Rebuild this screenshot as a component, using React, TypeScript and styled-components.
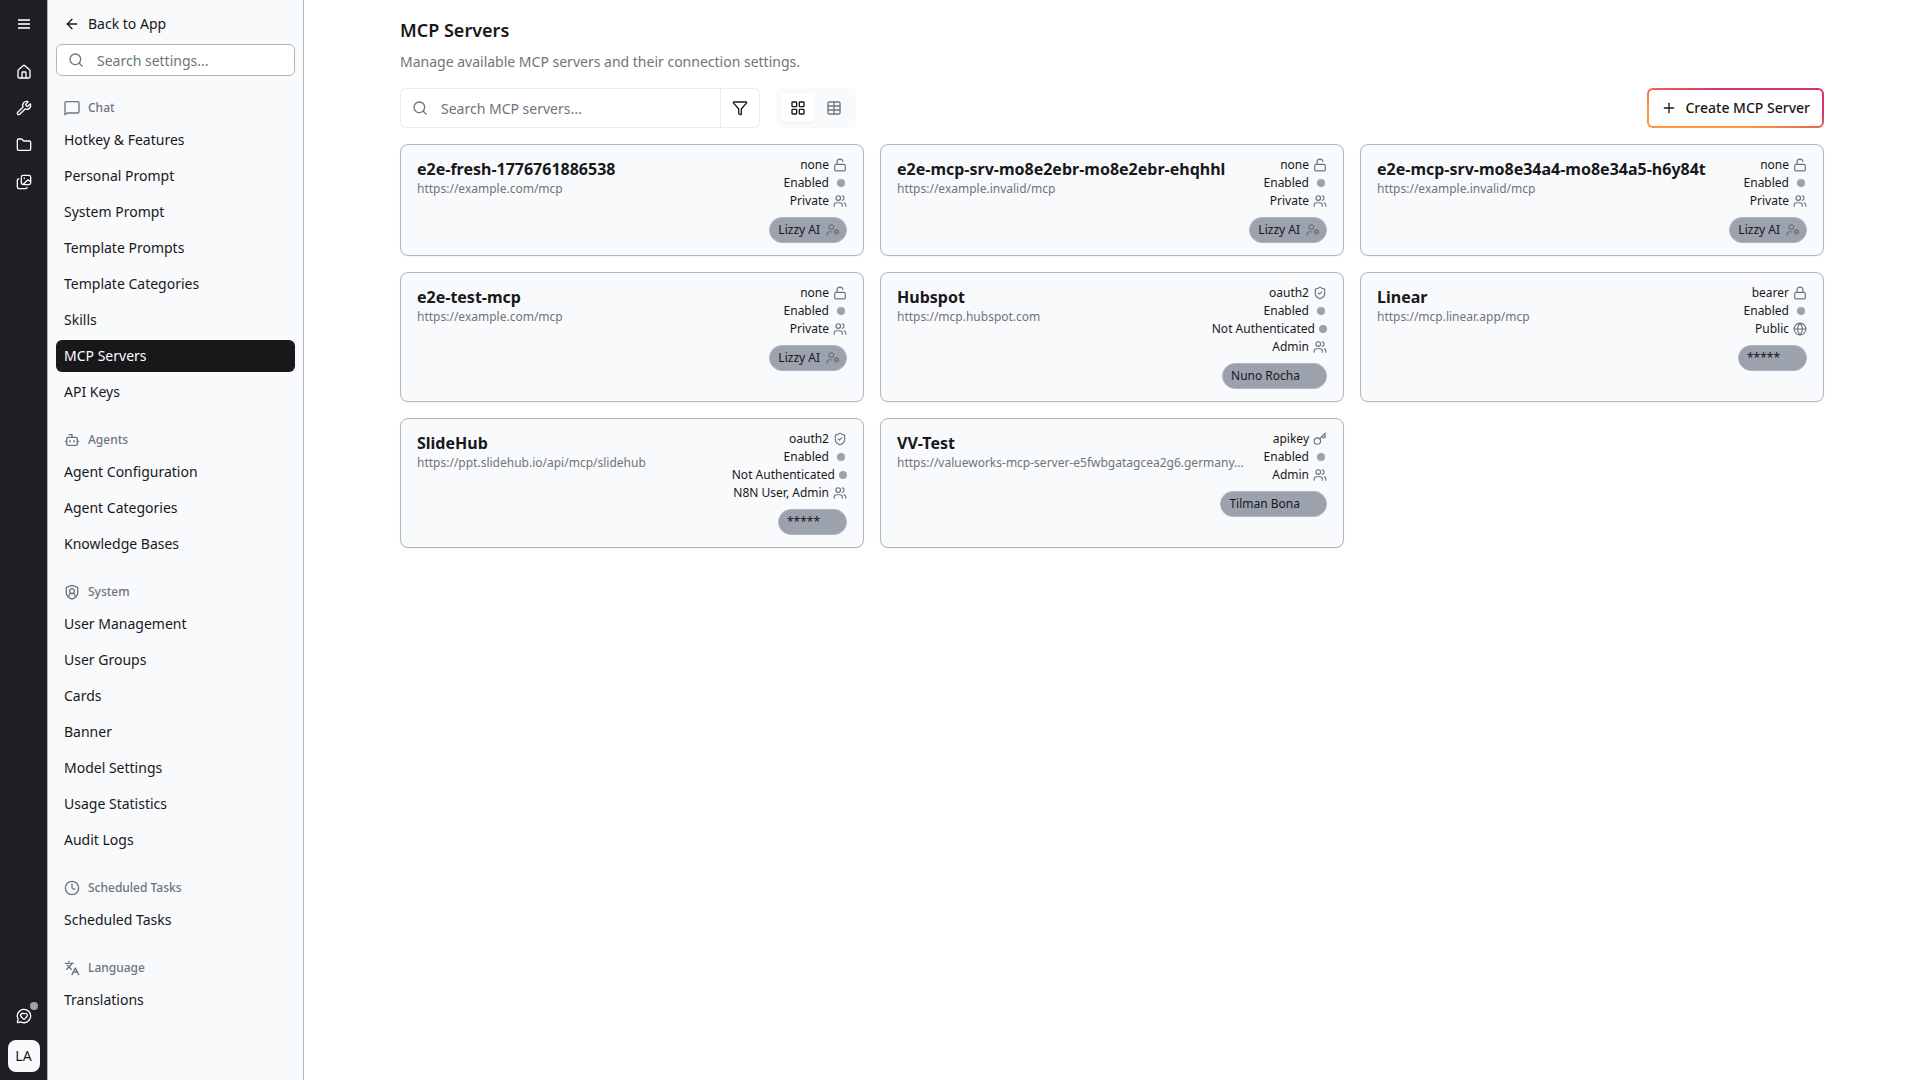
import React from "react";
import styled, { createGlobalStyle } from "styled-components";
import {
  ArrowLeft, Bot, Clock, Filter, Folder, Globe, House, Key, Languages, LayoutGrid, Lock, LockOpen,
  MessageCircleHeart, Plus, Search, ShieldCheck, Table, UserCog, Users, Wrench,
} from "lucide-react";

const c = {
  ink: "#18181b",
  rail: "#1f1e23",
  panel: "#f9fafc",
  muted: "#6c757d",
  line: "#adb5bd",
  soft: "#e9ebee",
  chip: "#9ca1ae",
};

const GlobalStyle = createGlobalStyle`
  *, *::before, *::after { box-sizing: border-box; }
  body { margin: 0; background: #fff; color: ${c.ink}; font-family: "Noto Sans", sans-serif; font-size: 14px; line-height: 20px; }
  button, input { font: inherit; color: inherit; }
  button { cursor: pointer; border: 0; padding: 0; background: none; }
  a { color: inherit; text-decoration: none; }
  h1, h2, p, ul { margin: 0; padding: 0; }
  ul { list-style: none; }
  svg { display: block; flex: none; }
`;

const Shell = styled.div`
  display: flex;
  min-height: 100vh;
`;

const Rail = styled.nav`
  display: flex;
  flex-direction: column;
  align-items: center;
  flex: none;
  width: 48px;
  padding: 12px 0 8px;
  background: ${c.rail};
  border-right: 1px solid ${c.line};
  color: #fff;
`;

const RailGroup = styled.div<{ $top: string }>`
  display: flex;
  flex-direction: column;
  align-items: center;
  gap: 12px;
  margin-top: ${(p) => p.$top};
`;

const RailButton = styled.button<{ $tall?: boolean }>`
  position: relative;
  display: grid;
  place-items: center;
  width: 32px;
  height: ${(p) => (p.$tall ? "26px" : "24px")};
`;

const Unread = styled.span`
  position: absolute;
  top: -2px;
  right: 2px;
  width: 8px;
  height: 8px;
  border-radius: 50%;
  background: ${c.chip};
`;

const Avatar = styled.button`
  width: 32px;
  height: 32px;
  border-radius: 8px;
  background: ${c.panel};
  color: ${c.ink};
`;

const Sidebar = styled.aside`
  flex: none;
  width: 256px;
  padding: 8px 8px 0;
  background: ${c.panel};
  border-right: 1px solid ${c.line};
`;

const BackLink = styled.a`
  display: flex;
  align-items: center;
  gap: 8px;
  height: 32px;
  padding: 0 8px;
`;

const Field = styled.label`
  display: flex;
  align-items: center;
  flex: 1;
  gap: 13px;
  min-width: 0;
  padding: 0 11px;
  color: ${c.muted};
`;

const TextInput = styled.input`
  flex: 1;
  min-width: 0;
  padding: 2px 0 0;
  border: 0;
  outline: 0;
  background: none;
  &::placeholder { color: ${c.muted}; opacity: 1; }
`;

const SettingsSearch = styled.div`
  display: flex;
  height: 32px;
  margin-top: 4px;
  background: #fff;
  border: 1px solid ${c.line};
  border-radius: 6px;
`;

const Section = styled.section`
  margin-top: 16px;
`;

const SectionTitle = styled.h2`
  display: flex;
  align-items: center;
  gap: 8px;
  height: 32px;
  padding: 0 8px;
  color: ${c.muted};
  font-size: 12px;
  font-weight: 500;
  line-height: 16px;
`;

const NavList = styled.ul`
  display: grid;
  gap: 4px;
`;

const NavLink = styled.a<{ $active?: boolean }>`
  display: flex;
  align-items: center;
  height: 32px;
  padding: 0 8px;
  border-radius: 6px;
  background: ${(p) => (p.$active ? c.ink : "transparent")};
  color: ${(p) => (p.$active ? "#fff" : c.ink)};
`;

const Main = styled.main`
  flex: 1;
  min-width: 0;
  padding: 16px 96px;
`;

const Heading = styled.h1`
  font-size: 18px;
  font-weight: 600;
  line-height: 28px;
`;

const Lead = styled.p`
  margin-top: 8px;
  color: ${c.muted};
`;

const Toolbar = styled.div`
  display: flex;
  gap: 16px;
  height: 40px;
  margin-top: 16px;
`;

const ServerSearch = styled.div`
  display: flex;
  width: 360px;
  border: 1px solid ${c.soft};
  border-radius: 6px;
`;

const FilterButton = styled.button`
  display: grid;
  place-items: center;
  width: 39px;
  border-left: 1px solid ${c.soft};
`;

const ViewSwitch = styled.div`
  display: flex;
  gap: 4px;
  padding: 6px;
  border-radius: 6px;
  background: ${c.panel};
`;

const ViewButton = styled.button<{ $active?: boolean }>`
  display: grid;
  place-items: center;
  width: 32px;
  border-radius: 4px;
  background: ${(p) => (p.$active ? "#fff" : "transparent")};
  box-shadow: ${(p) => (p.$active ? "0 1px 2px rgba(0, 0, 0, 0.06)" : "none")};
  color: ${(p) => (p.$active ? c.ink : c.muted)};
`;

const CreateButton = styled.button`
  display: flex;
  align-items: center;
  gap: 8px;
  margin-left: auto;
  padding: 0 12px;
  border: 2px solid transparent;
  border-radius: 6px;
  background:
    linear-gradient(#fff, #fff) padding-box,
    linear-gradient(to top right, #ff963c 30%, #d6336c 70%) border-box;
  font-weight: 500;
`;

const Grid = styled.div`
  display: grid;
  grid-template-columns: repeat(3, minmax(0, 1fr));
  gap: 16px;
  margin-top: 16px;
`;

const Card = styled.article`
  display: flex;
  flex-direction: column;
  gap: 8px;
  padding: 12px 16px;
  background: ${c.panel};
  border: 1px solid ${c.line};
  border-radius: 8px;
  box-shadow: 0 1px 2px rgba(0, 0, 0, 0.05);
`;

const CardTop = styled.div`
  display: flex;
  justify-content: space-between;
  gap: 16px;
`;

const CardText = styled.div`
  min-width: 0;
`;

const CardTitle = styled.h2`
  overflow: hidden;
  font-size: 16px;
  font-weight: 700;
  line-height: 24px;
  text-overflow: ellipsis;
  white-space: nowrap;
`;

const CardUrl = styled.p`
  color: ${c.muted};
  font-size: 12px;
  line-height: 16px;
  white-space: nowrap;
`;

const CardMeta = styled.div`
  display: flex;
  flex: none;
  flex-direction: column;
  align-items: flex-end;
  gap: 2px;
  font-size: 12px;
  line-height: 16px;
`;

const MetaRow = styled.div`
  display: flex;
  align-items: center;
  gap: 4px;
  svg { color: ${c.muted}; }
`;

const Dot = styled.span<{ $inset?: boolean }>`
  width: 8px;
  height: 8px;
  margin: ${(p) => (p.$inset ? "0 2px 0 4px" : "0")};
  border-radius: 50%;
  background: ${c.chip};
`;

const Owner = styled.div`
  display: flex;
  align-items: center;
  align-self: flex-end;
  gap: 6px;
  height: 26px;
  padding: 0 6px 0 8px;
  border: 1px solid ${c.line};
  border-radius: 13px;
  background: ${c.chip};
  font-size: 12px;
  line-height: 16px;
  svg { color: ${c.muted}; }
`;

const OwnerSlot = styled.span`
  width: 14px;
  height: 14px;
`;

const MenuIcon = () => (
  <svg width="12" height="10" viewBox="0 0 12 10" fill="#cfd3d2">
    <rect width="12" height="2" />
    <rect y="4" width="12" height="2" />
    <rect y="8" width="12" height="2" />
  </svg>
);

const ImagesIcon = () => (
  <svg width="16" height="16" viewBox="0 0 24 24" fill="none" stroke="currentColor" strokeWidth="2" strokeLinecap="round" strokeLinejoin="round">
    <rect x="8" y="2" width="14" height="14" rx="2.7" />
    <path d="M4 7.500A2 2 0 0 0 2 9.500v10a2.500 2.500 0 0 0 2.500 2.500h10a2 2 0 0 0 2-2" />
    <path d="m11 15.500 7-7 4 3" />
    <circle cx="12.500" cy="6.500" r="1.200" fill="currentColor" stroke="none" />
  </svg>
);

const ChatIcon = () => (
  <svg width="16" height="16" viewBox="0 0 24 24" fill="none" stroke="currentColor" strokeWidth="2" strokeLinejoin="round">
    <path d="M1.500 22V4.500a2 2 0 0 1 2-2h17a2 2 0 0 1 2 2v13a2 2 0 0 1-2 2H5z" />
  </svg>
);

const ShieldUserIcon = () => (
  <svg width="16" height="16" viewBox="0 0 24 24" fill="none" stroke="currentColor" strokeWidth="2" strokeLinecap="round" strokeLinejoin="round">
    <path d="M12 2 3.500 5v8c0 4.500 3.500 8 8.500 9.500 5-1.500 8.500-5 8.500-9.500V5z" />
    <circle cx="12" cy="10.500" r="3.500" />
    <path d="M7.500 18.500v-1a3 3 0 0 1 3-3h3a3 3 0 0 1 3 3v1" />
  </svg>
);

const sections = [
  { title: "Chat", icon: <ChatIcon />, items: ["Hotkey & Features", "Personal Prompt", "System Prompt", "Template Prompts", "Template Categories", "Skills", "MCP Servers", "API Keys"] },
  { title: "Agents", icon: <Bot size={16} />, items: ["Agent Configuration", "Agent Categories", "Knowledge Bases"] },
  { title: "System", icon: <ShieldUserIcon />, items: ["User Management", "User Groups", "Cards", "Banner", "Model Settings", "Usage Statistics", "Audit Logs"] },
  { title: "Scheduled Tasks", icon: <Clock size={16} />, items: ["Scheduled Tasks"] },
  { title: "Language", icon: <Languages size={16} />, items: ["Translations"] },
];

type Auth = "none" | "oauth2" | "bearer" | "apikey";
type Server = { name: string; url: string; auth: Auth; pending?: boolean; access: string; owner: string; managed?: boolean };

const servers: Server[] = [
  { name: "e2e-fresh-1776761886538", url: "https://example.com/mcp", auth: "none", access: "Private", owner: "Lizzy AI", managed: true },
  { name: "e2e-mcp-srv-mo8e2ebr-mo8e2ebr-ehqhhl", url: "https://example.invalid/mcp", auth: "none", access: "Private", owner: "Lizzy AI", managed: true },
  { name: "e2e-mcp-srv-mo8e34a4-mo8e34a5-h6y84t", url: "https://example.invalid/mcp", auth: "none", access: "Private", owner: "Lizzy AI", managed: true },
  { name: "e2e-test-mcp", url: "https://example.com/mcp", auth: "none", access: "Private", owner: "Lizzy AI", managed: true },
  { name: "Hubspot", url: "https://mcp.hubspot.com", auth: "oauth2", pending: true, access: "Admin", owner: "Nuno Rocha" },
  { name: "Linear", url: "https://mcp.linear.app/mcp", auth: "bearer", access: "Public", owner: "*****" },
  { name: "SlideHub", url: "https://ppt.slidehub.io/api/mcp/slidehub", auth: "oauth2", pending: true, access: "N8N User, Admin", owner: "*****" },
  { name: "VV-Test", url: "https://valueworks-mcp-server-e5fwbgatagcea2g6.germany...", auth: "apikey", access: "Admin", owner: "Tilman Bona" },
];

const authIcons = { none: LockOpen, oauth2: ShieldCheck, bearer: Lock, apikey: Key };

function ServerCard({ server }: { server: Server }) {
  const AuthIcon = authIcons[server.auth];
  const AccessIcon = server.access === "Public" ? Globe : Users;
  return (
    <Card>
      <CardTop>
        <CardText>
          <CardTitle>{server.name}</CardTitle>
          <CardUrl>{server.url}</CardUrl>
        </CardText>
        <CardMeta>
          <MetaRow>{server.auth}<AuthIcon size={14} /></MetaRow>
          <MetaRow>Enabled<Dot $inset /></MetaRow>
          {server.pending && <MetaRow>Not Authenticated<Dot /></MetaRow>}
          <MetaRow>{server.access}<AccessIcon size={14} /></MetaRow>
        </CardMeta>
      </CardTop>
      <Owner>
        {server.owner}
        {server.managed ? <UserCog size={14} /> : <OwnerSlot />}
      </Owner>
    </Card>
  );
}

export default function App() {
  return (
    <>
      <GlobalStyle />
      <Shell>
        <Rail aria-label="Main">
          <RailButton aria-label="Menu"><MenuIcon /></RailButton>
          <RailGroup $top="24px">
            <RailButton aria-label="Home"><House size={16} /></RailButton>
            <RailButton aria-label="Tools"><Wrench size={16} /></RailButton>
            <RailButton aria-label="Files" $tall><Folder size={16} /></RailButton>
            <RailButton aria-label="Images"><ImagesIcon /></RailButton>
          </RailGroup>
          <RailGroup $top="auto">
            <RailButton aria-label="Feedback"><MessageCircleHeart size={16} /><Unread /></RailButton>
            <Avatar aria-label="Account">LA</Avatar>
          </RailGroup>
        </Rail>
        <Sidebar>
          <BackLink href="#"><ArrowLeft size={16} />Back to App</BackLink>
          <SettingsSearch>
            <Field>
              <Search size={16} />
              <TextInput type="text" aria-label="Search settings" placeholder="Search settings..." />
            </Field>
          </SettingsSearch>
          {sections.map((s) => (
            <Section key={s.title}>
              <SectionTitle>{s.icon}{s.title}</SectionTitle>
              <NavList>
                {s.items.map((item) => (
                  <li key={item}><NavLink href="#" $active={item === "MCP Servers"}>{item}</NavLink></li>
                ))}
              </NavList>
            </Section>
          ))}
        </Sidebar>
        <Main>
          <Heading>MCP Servers</Heading>
          <Lead>Manage available MCP servers and their connection settings.</Lead>
          <Toolbar>
            <ServerSearch>
              <Field>
                <Search size={16} />
                <TextInput type="text" aria-label="Search MCP servers" placeholder="Search MCP servers..." />
              </Field>
              <FilterButton aria-label="Filter"><Filter size={16} /></FilterButton>
            </ServerSearch>
            <ViewSwitch>
              <ViewButton $active aria-label="Card view"><LayoutGrid size={16} /></ViewButton>
              <ViewButton aria-label="Table view"><Table size={16} /></ViewButton>
            </ViewSwitch>
            <CreateButton><Plus size={16} />Create MCP Server</CreateButton>
          </Toolbar>
          <Grid>
            {servers.map((s) => <ServerCard key={s.name} server={s} />)}
          </Grid>
        </Main>
      </Shell>
    </>
  );
}
